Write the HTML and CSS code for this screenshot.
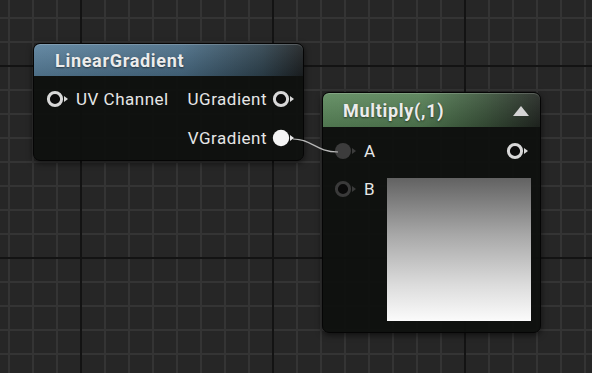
FILE: index.html
```html
<!DOCTYPE html>
<html lang="en">
  <head>
    <meta charset="UTF-8" />
    <meta name="viewport" content="width=device-width, initial-scale=1.0" />
    <title>Material Graph</title>
    <link rel="stylesheet" href="styles.css">
  </head>
  <body>
    <div class="canvas">
      <!-- wire between VGradient and A -->
      <svg class="wire" width="592" height="373">
        <path d="M293 139 C 312 139, 316 152, 338 152" fill="none" stroke="#b8b8b8" stroke-width="1.2" />
      </svg>

      <div class="node node-linear">
        <div class="node-header header-blue">
          <span class="node-title">LinearGradient</span>
        </div>
        <div class="node-body">
          <div class="pin-row">
            <div class="pin-in">
              <svg class="pin" width="23" height="18" viewBox="0 0 23 18">
                <circle cx="9" cy="9" r="6.6" fill="#0c0c0c" stroke="#d8d8d8" stroke-width="3" />
                <polygon points="18,6 22,9 18,12" fill="#d8d8d8" />
              </svg>
              <span class="pin-label">UV Channel</span>
            </div>
            <div class="pin-out">
              <span class="pin-label">UGradient</span>
              <svg class="pin" width="23" height="18" viewBox="0 0 23 18">
                <circle cx="9" cy="9" r="6.6" fill="#0c0c0c" stroke="#d8d8d8" stroke-width="3" />
                <polygon points="18,6 22,9 18,12" fill="#d8d8d8" />
              </svg>
            </div>
          </div>
          <div class="pin-row pin-row-end">
            <div class="pin-out">
              <span class="pin-label">VGradient</span>
              <svg class="pin" width="23" height="18" viewBox="0 0 23 18">
                <circle cx="9" cy="9" r="8.2" fill="#f4f4f4" />
                <polygon points="18,6 22,9 18,12" fill="#e8e8e8" />
              </svg>
            </div>
          </div>
        </div>
      </div>

      <div class="node node-multiply">
        <div class="node-header header-green">
          <span class="node-title">Multiply(,1)</span>
          <span class="collapse-arrow"></span>
        </div>
        <div class="node-body">
          <div class="pin-row">
            <div class="pin-in">
              <svg class="pin" width="23" height="18" viewBox="0 0 23 18">
                <circle cx="9" cy="9" r="8" fill="#3c3c3c" />
                <polygon points="18,6 22,9 18,12" fill="#3c3c3c" />
              </svg>
              <span class="pin-label">A</span>
            </div>
            <div class="pin-out">
              <svg class="pin" width="23" height="18" viewBox="0 0 23 18">
                <circle cx="9" cy="9" r="6.6" fill="#0c0c0c" stroke="#d8d8d8" stroke-width="3" />
                <polygon points="18,6 22,9 18,12" fill="#d8d8d8" />
              </svg>
            </div>
          </div>
          <div class="pin-row preview-row">
            <div class="pin-in">
              <svg class="pin" width="23" height="18" viewBox="0 0 23 18">
                <circle cx="9" cy="9" r="6.6" fill="#0a0a0a" stroke="#3a3a3a" stroke-width="3" />
                <polygon points="18,6 22,9 18,12" fill="#3a3a3a" />
              </svg>
              <span class="pin-label">B</span>
            </div>
            <div class="preview"></div>
          </div>
        </div>
      </div>
    </div>
  </body>
</html>
```

FILE: styles.css
```css
body {
  margin: 0;
  font-family: Roboto, "Liberation Sans", sans-serif;
  background-color: #262626;
}

/* Graph background: minor lines every 24px, major every 192px */
.canvas {
  position: relative;
  width: 592px;
  height: 373px;
  overflow: hidden;
  background-color: #262626;
  background-image:
    linear-gradient(to right, #131313 2px, transparent 2px),
    linear-gradient(to bottom, #131313 2px, transparent 2px),
    linear-gradient(to right, #343434 2px, transparent 2px),
    linear-gradient(to bottom, #343434 2px, transparent 2px);
  background-size: 192px 100%, 100% 192px, 24px 100%, 100% 24px;
  background-position: 80px 0, 0 65px, 8px 0, 0 17px;
}

.wire {
  position: absolute;
  top: 0;
  left: 0;
  z-index: 2;
}

.node {
  position: absolute;
  box-sizing: border-box;
  display: flex;
  flex-direction: column;
  border: 1px solid #050505;
  border-radius: 7px;
  background-color: rgba(14, 16, 14, 0.93);
  box-shadow: 0 2px 6px rgba(0, 0, 0, 0.6);
  color: #e4e4e4;
  z-index: 1;
}

.node-linear {
  left: 33px;
  top: 43px;
  width: 271px;
  height: 118px;
}

.node-multiply {
  left: 322px;
  top: 92px;
  width: 219px;
  height: 241px;
}

.node-header {
  display: flex;
  align-items: center;
  border-radius: 6px 6px 0 0;
  box-shadow: inset 0 1px 0 rgba(255, 255, 255, 0.18);
}

.header-blue {
  height: 32px;
  padding-left: 21px;
  background-image:
    linear-gradient(to bottom, rgba(255, 255, 255, 0.08), rgba(0, 0, 0, 0.15)),
    linear-gradient(to right, #5a819d 0%, #4a6d86 55%, #2f434f 85%, #1d2123 100%);
}

.header-green {
  height: 34px;
  padding-left: 20px;
  padding-right: 11px;
  background-image:
    linear-gradient(to bottom, rgba(255, 255, 255, 0.08), rgba(0, 0, 0, 0.15)),
    linear-gradient(to right, #5d8a5d 0%, #557f55 45%, #3a533a 75%, #222722 100%);
}

.node-title {
  font-size: 18px;
  font-weight: bold;
  letter-spacing: 0.7px;
  color: #ececec;
  text-shadow: 0 1px 2px rgba(0, 0, 0, 0.5);
}

.collapse-arrow {
  margin-left: auto;
  margin-top: 1px;
  width: 0;
  height: 0;
  border-left: 8px solid transparent;
  border-right: 8px solid transparent;
  border-bottom: 10px solid #d4d4d4;
}

.node-body {
  flex: 1;
  display: flex;
  flex-direction: column;
}

.node-linear .node-body {
  padding: 11px 8px 0 12px;
  gap: 15px;
}

.node-multiply .node-body {
  padding: 12px 11px 0 11px;
  gap: 14px;
}

.pin-row {
  display: flex;
  align-items: center;
  height: 24px;
}

.pin-row-end {
  justify-content: flex-end;
}

.pin-in,
.pin-out {
  display: flex;
  align-items: center;
}

.pin-in .pin {
  margin-right: 7px;
}

.pin-out {
  margin-left: auto;
}

.pin-out .pin {
  margin-left: 5px;
}

.pin {
  display: block;
}

.pin-label {
  font-size: 17px;
  letter-spacing: 0.5px;
  color: #e6e6e6;
}

.preview-row {
  align-items: flex-start;
  height: auto;
}

.preview-row .pin-in {
  height: 24px;
}

.preview {
  margin-left: auto;
  margin-top: 1px;
  margin-right: -2px;
  width: 144px;
  height: 143px;
  background: linear-gradient(to bottom, #626262 0%, #a8a8a8 40%, #dcdcdc 75%, #fbfbfb 100%);
}
```
